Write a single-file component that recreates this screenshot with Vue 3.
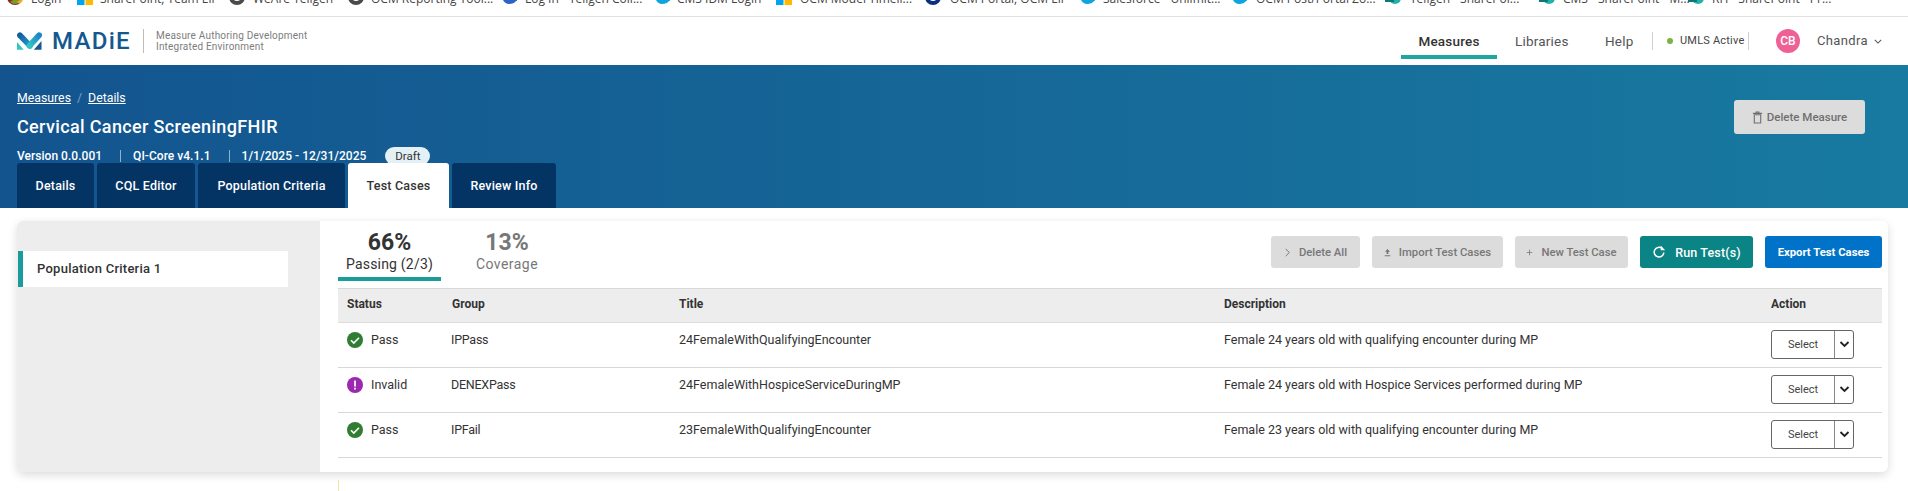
<script setup>
const bookmarks = [
  { label: 'Login', w: 70, tx: 24, icon: 'multi' },
  { label: 'SharePoint, Team Ell', w: 152, tx: 23, icon: 'win' },
  { label: "WeAre Teligen", w: 119, tx: 24, icon: 'ring', color: '#4a4a4a' },
  { label: 'OCM Reporting Tool...', w: 153, tx: 23, icon: 'ring', color: '#4a4a4a' },
  { label: 'Log In - Teligen Coll...', w: 153, tx: 24, icon: 'cloud', color: '#2c63c9' },
  { label: 'CMS IDM Login', w: 122, tx: 23, icon: 'cloud', color: '#0ea5df' },
  { label: 'OCM Model Timeli...', w: 149, tx: 24, icon: 'win' },
  { label: 'OCM Portal, OCM Ell', w: 154, tx: 25, icon: 'ring', color: '#0b2f7e' },
  { label: 'Salesforce - Unlimit...', w: 152, tx: 24, icon: 'cloud', color: '#0ea5df' },
  { label: 'OCM Post/Portal Zo...', w: 154, tx: 25, icon: 'cloud', color: '#0ea5df' },
  { label: 'Teligen - SharePoi...', w: 154, tx: 25, icon: 'sp' },
  { label: 'CMS - SharePoint - M...', w: 149, tx: 24, icon: 'sp' },
  { label: 'RH - SharePoint - Pr...', w: 150, tx: 24, icon: 'sp' }
]
const navItems = ['Measures', 'Libraries', 'Help']
const tabs = ['Details', 'CQL Editor', 'Population Criteria', 'Test Cases', 'Review Info']
const tabWidths = [77, 98, 147, 101, 104]
const rows = [
  { status: 'Pass', group: 'IPPass', title: '24FemaleWithQualifyingEncounter', desc: 'Female 24 years old with qualifying encounter during MP' },
  { status: 'Invalid', group: 'DENEXPass', title: '24FemaleWithHospiceServiceDuringMP', desc: 'Female 24 years old with Hospice Services performed during MP' },
  { status: 'Pass', group: 'IPFail', title: '23FemaleWithQualifyingEncounter', desc: 'Female 23 years old with qualifying encounter during MP' }
]
</script>

<template>
  <div class="page">
    <div class="bookmarks">
      <div class="bm-inner">
        <div v-for="b in bookmarks" :key="b.label" class="bm" :style="{ width: b.w + 'px' }">
          <svg class="bm-icon" viewBox="0 0 16 16">
            <template v-if="b.icon === 'win'">
              <rect x="0" y="0" width="7.500" height="7.500" fill="#f25022" />
              <rect x="8.500" y="0" width="7.500" height="7.500" fill="#7fba00" />
              <rect x="0" y="8.500" width="7.500" height="7.500" fill="#00a4ef" />
              <rect x="8.500" y="8.500" width="7.500" height="7.500" fill="#ffb900" />
            </template>
            <template v-else-if="b.icon === 'multi'">
              <circle cx="8" cy="8" r="8" fill="#8a2a1c" />
              <path d="M3 13a7 7 0 0 0 10 0l3-3-1-2-5 3H6z" fill="#7a9a2e" />
              <path d="M10 13l5-3 .5 2-3 3z" fill="#e7b52d" />
            </template>
            <circle v-else-if="b.icon === 'ring'" cx="8" cy="8" r="6" fill="none" :stroke="b.color" stroke-width="4" />
            <path v-else-if="b.icon === 'cloud'" d="M1 8a3.500 3.500 0 0 1 5-4 4 4 0 0 1 8 2 3 3 0 0 1 1 6c-1 2-4 3-7 3S2 13 1 8z" :fill="b.color" />
            <template v-else>
              <circle cx="10" cy="9" r="6" fill="#26b1a8" />
              <rect x="0" y="2" width="9" height="11" fill="#0a7a78" />
            </template>
          </svg>
          <span class="bm-text" :style="{ left: b.tx + 'px' }">{{ b.label }}</span>
        </div>
      </div>
    </div>

    <header class="topbar">
      <div class="brand">
        <svg class="logo-mark" viewBox="0 0 26 18">
          <defs>
            <linearGradient id="lgA" x1="0" y1="0" x2="1" y2="1"><stop offset="0" stop-color="#13609f" /><stop offset="1" stop-color="#1f9fd0" /></linearGradient>
            <linearGradient id="lgB" x1="0" y1="1" x2="1" y2="0"><stop offset="0" stop-color="#2fc4c4" /><stop offset="1" stop-color="#1d86c8" /></linearGradient>
          </defs>
          <path d="M3 3L13.500 14" fill="none" stroke="url(#lgA)" stroke-width="6" stroke-linecap="round" />
          <path d="M13 14L23 3" fill="none" stroke="url(#lgB)" stroke-width="6" stroke-linecap="round" />
          <path d="M0 10l7 8H0z" fill="#35c6c4" />
          <path d="M25.500 9v9h-8z" fill="#14588f" />
        </svg>
        <span class="logo-text">MADiE</span>
        <span class="logo-div"></span>
        <span class="logo-sub">Measure Authoring Development<br />Integrated Environment</span>
      </div>
      <nav class="nav">
        <a v-for="(n, i) in navItems" :key="n" class="nav-item" :class="['n' + i, { active: i === 0 }]">{{ n }}</a>
        <span class="nav-div first"></span>
        <span class="umls"><i class="dot"></i>UMLS Active</span>
        <span class="nav-div"></span>
        <span class="avatar">CB</span>
        <span class="user">Chandra</span>
        <svg class="user-chev" viewBox="0 0 10 6"><path d="M1 1l4 4 4-4" fill="none" stroke="#555" stroke-width="1.300" /></svg>
      </nav>
    </header>

    <section class="hero">
      <div class="hero-top">
        <div class="hero-left">
          <div class="crumbs"><a>Measures</a><span class="slash">/</span><a>Details</a></div>
          <h1 class="title">Cervical Cancer ScreeningFHIR</h1>
          <div class="meta">
            <span>Version 0.0.001</span><i class="meta-div"></i>
            <span>QI-Core v4.1.1</span><i class="meta-div"></i>
            <span>1/1/2025 - 12/31/2025</span>
            <span class="pill">Draft</span>
          </div>
        </div>
        <button class="del-measure">
          <svg viewBox="0 0 12 14" class="trash"><path d="M2.500 4h7v9h-7zM1 2.500h10M4.500 2.500V1h3v1.500" fill="none" stroke="#6f6f6f" stroke-width="1.200" /></svg>
          Delete Measure
        </button>
      </div>
      <div class="tabs">
        <div v-for="(t, i) in tabs" :key="t" class="tab" :class="{ on: i === 3 }" :style="{ width: tabWidths[i] + 'px' }">{{ t }}</div>
      </div>
    </section>

    <main class="card">
      <aside class="side">
        <div class="side-item">Population Criteria 1</div>
      </aside>
      <div class="content">
        <div class="toolbar">
          <div class="stats">
            <div class="stat on"><b>66%</b><span>Passing (2/3)</span></div>
            <div class="stat"><b>13%</b><span>Coverage</span></div>
          </div>
          <div class="actions">
            <button class="btn dis w-del">
              <svg viewBox="0 0 6 10" class="ic"><path d="M1 1l4 4-4 4" fill="none" stroke="#777" stroke-width="1.100" /></svg>Delete All
            </button>
            <button class="btn dis w-imp">
              <svg viewBox="0 0 10 12" class="ic"><path d="M5 1L1.500 5h2.200v3h2.600V5h2.200zM1 10h8v1.200H1z" fill="#777" /></svg>Import Test Cases
            </button>
            <button class="btn dis w-new">
              <svg viewBox="0 0 10 10" class="ic"><path d="M5 1v8M1 5h8" fill="none" stroke="#777" stroke-width="1.100" /></svg>New Test Case
            </button>
            <button class="btn run w-run">
              <svg viewBox="0 0 16 16" class="ic-run"><path d="M13.500 8.500A5.500 5.500 0 1 1 11.400 3.800" fill="none" stroke="#fff" stroke-width="1.700" /><path d="M10 .5v5.500h5z" fill="#fff" /></svg>Run Test(s)
            </button>
            <button class="btn exp w-exp">Export Test Cases</button>
          </div>
        </div>
        <div class="table">
          <div class="tr th">
            <div>Status</div><div>Group</div><div>Title</div><div>Description</div><div>Action</div>
          </div>
          <div v-for="r in rows" :key="r.title" class="tr td">
            <div class="st">
              <svg v-if="r.status === 'Pass'" viewBox="0 0 16 16" class="st-ic"><circle cx="8" cy="8" r="8" fill="#2e7d32" /><path d="M4 8.300l2.800 2.800L12 5.800" fill="none" stroke="#fff" stroke-width="1.600" /></svg>
              <svg v-else viewBox="0 0 16 16" class="st-ic"><circle cx="8" cy="8" r="8" fill="#9c27b0" /><rect x="7.100" y="3.500" width="1.800" height="6" fill="#fff" /><rect x="7.100" y="10.700" width="1.800" height="1.800" fill="#fff" /></svg>
              <span>{{ r.status }}</span>
            </div>
            <div class="grp">{{ r.group }}</div>
            <div>{{ r.title }}</div>
            <div>{{ r.desc }}</div>
            <div class="act">
              <div class="sel"><span class="sel-l">Select</span><span class="sel-r"><svg viewBox="0 0 10 7"><path d="M1 1l4 4 4-4" fill="none" stroke="#222" stroke-width="1.800" /></svg></span></div>
            </div>
          </div>
        </div>
      </div>
    </main>
    <div class="stray"></div>
  </div>
</template>

<style>
html, body { margin: 0; background: #fff; overflow: hidden; }
</style>

<style scoped>
.page { position: relative; width: 1908px; height: 491px; overflow: hidden; font-family: Roboto, "Liberation Sans", sans-serif; color: #333; background: #fff; }
.bookmarks { height: 16px; border-bottom: 1px solid #e0e0e0; overflow: hidden; }
.bm-inner { display: flex; margin-top: -11px; padding-left: 7px; }
.bm { position: relative; flex: none; height: 16px; }
.bm-icon { width: 16px; height: 16px; display: block; }
.bm-text { position: absolute; top: 2px; white-space: nowrap; font: 12px/16px "Open Sans", sans-serif; color: #444; }

.topbar { height: 48px; display: flex; justify-content: space-between; background: #fff; }
.brand { display: flex; align-items: center; padding-left: 17px; height: 48px; }
.logo-mark { width: 25px; height: 18px; }
.logo-text { margin-left: 10px; font-size: 24px; font-weight: 500; letter-spacing: 1.300px; color: #14588f; line-height: 18px; }
.logo-div { width: 1px; height: 24px; background: #bdbdbd; margin-left: 12px; }
.logo-sub { margin-left: 12px; font-size: 10px; line-height: 11px; color: #7d7d7d; letter-spacing: .2px; }
.nav { position: relative; width: 520px; height: 48px; }
.nav > * { position: absolute; }
.nav-item { top: 16px; font-size: 13.500px; line-height: 16px; color: #555; letter-spacing: .2px; }
.nav-item.n0 { left: 13px; width: 96px; text-align: center; color: #333; font-weight: 500; border-bottom: 4px solid #20a5a5; height: 22px; }
.nav-item.n1 { left: 127px; }
.nav-item.n2 { left: 217px; }
.nav-div { top: 15px; left: 360px; width: 1px; height: 18px; background: #d0d0d0; }
.nav-div.first { left: 264px; }
.umls { top: 16px; left: 279px; display: flex; align-items: center; font-size: 11px; line-height: 15px; color: #444; letter-spacing: .2px; white-space: nowrap; }
.dot { width: 6px; height: 6px; border-radius: 50%; background: #7cb342; margin-right: 7px; }
.avatar { top: 12px; left: 388px; width: 24px; height: 24px; border-radius: 50%; background: #ee6096; color: #fff; font-size: 12px; font-weight: 500; line-height: 24px; text-align: center; }
.user { top: 16px; left: 429px; font-size: 13px; line-height: 16px; color: #555; letter-spacing: .35px; }
.user-chev { top: 22px; left: 486px; width: 8px; height: 5px; }

.hero { height: 143px; box-sizing: border-box; background: linear-gradient(90deg, #13548f 0%, #187aa0 100%); display: flex; flex-direction: column; justify-content: flex-end; padding-left: 17px; }
.hero-top { display: flex; justify-content: space-between; align-items: flex-start; height: 98px; }
.crumbs { font-size: 12.300px; line-height: 16px; margin-top: 25px; color: #fff; display: flex; gap: 6px; }
.crumbs a { text-decoration: underline; }
.slash { color: #7ea6c4; }
.title { margin: 9px 0 0; font-size: 18px; line-height: 24px; font-weight: 500; color: #fff; letter-spacing: .35px; }
.meta { display: flex; align-items: center; height: 18px; margin-top: 8px; font-size: 12px; font-weight: 500; letter-spacing: .03px; color: #fff; white-space: nowrap; }
.meta-div { width: 1px; height: 12px; background: #8fb4cc; margin: 0 12px 0 18px; }
.pill { margin-left: 19px; width: 45px; height: 18px; line-height: 18px; text-align: center; border-radius: 9px; background: #e3f0f6; color: #333; font-size: 11.500px; font-weight: 400; }
.del-measure { margin: 35px 43px 0 0; width: 131px; height: 34px; border: 0; border-radius: 3px; background: #dcdcdc; color: #6f6f6f; font: 500 11.500px Roboto, sans-serif; display: flex; align-items: center; justify-content: center; gap: 4px; padding: 0; }
.trash { width: 11px; height: 13px; }
.tabs { display: flex; gap: 3px; height: 45px; }
.tab { height: 45px; line-height: 45px; text-align: center; background: #043464; color: #fff; font-size: 12.500px; font-weight: 500; border-radius: 3px 3px 0 0; letter-spacing: .2px; }
.tab.on { background: #fff; color: #333; }

.card { display: flex; margin: 13px 0 0 17px; width: 1871px; height: 251px; background: #fff; border-radius: 6px; box-shadow: 0 3px 10px rgba(0,0,0,.14); overflow: hidden; }
.side { width: 303px; flex: none; background: #ededed; padding-top: 30px; box-sizing: border-box; }
.side-item { width: 270px; height: 36px; box-sizing: border-box; margin-left: 1px; background: #fff; border-left: 5px solid #1a9c9c; padding-left: 14px; line-height: 36px; font-size: 13px; font-weight: 500; color: #333; letter-spacing: .25px; }
.content { width: 1544px; margin-left: 18px; flex: none; }
.toolbar { height: 67px; display: flex; justify-content: space-between; }
.stats { display: flex; height: 60px; }
.stat { width: 103px; display: flex; flex-direction: column; align-items: center; padding-top: 10px; height: 46px; color: #777; }
.stat + .stat { margin-left: 14px; width: 104px; }
.stat.on { border-bottom: 4px solid #1a9c9c; color: #333; }
.stat b { font-size: 23px; line-height: 24px; font-weight: 700; }
.stat span { font-size: 14px; line-height: 19px; font-weight: 400; letter-spacing: .2px; }
.stat + .stat span { letter-spacing: .45px; }
.actions { display: flex; gap: 12px; padding-top: 15px; }
.btn { height: 32px; border: 0; border-radius: 3px; font: 500 11.300px Roboto, sans-serif; display: flex; align-items: center; justify-content: center; padding: 0; white-space: nowrap; }
.dis { background: #dcdcdc; color: #777; }
.run { background: #0a8484; color: #fff; font-size: 12.500px; letter-spacing: .15px; }
.exp { background: #0073c8; color: #fff; font-weight: 700; }
.w-del { width: 89px; } .w-imp { width: 131px; } .w-new { width: 113px; } .w-run { width: 113px; } .w-exp { width: 117px; }
.ic { width: 7px; height: 9px; margin-right: 8px; }
.ic-run { width: 14px; height: 14px; margin-right: 9px; }
.table { border-top: 1px solid #d8d8d8; }
.tr { display: grid; grid-template-columns: 105px 227px 545px 547px 120px; }
.tr > div { padding-left: 9px; }
.th { height: 34px; background: #ededed; border-bottom: 1px solid #dcdcdc; box-sizing: border-box; font-size: 12px; font-weight: 700; line-height: 31px; color: #333; }
.td { height: 45px; box-sizing: border-box; border-bottom: 1px solid #d8d8d8; font-size: 12.500px; line-height: 16px; color: #333; padding-top: 9px; }
.st { display: flex; align-items: flex-start; gap: 8px; }
.st-ic { width: 16px; height: 16px; flex: none; }
.tr > .grp { padding-left: 8px; letter-spacing: -.25px; }
.act { margin-top: -2px; }
.sel { display: flex; width: 83px; height: 29px; box-sizing: border-box; border: 1px solid #666; border-radius: 3px; font-size: 11px; color: #444; line-height: 27px; text-align: center; }
.sel-l { width: 62px; border-right: 1px solid #888; }
.sel-r { flex: 1; display: flex; align-items: center; justify-content: center; }
.sel-r svg { width: 11px; height: 7px; }
.stray { position: absolute; left: 338px; top: 480px; width: 1px; height: 11px; background: #f5e3a6; }
</style>
